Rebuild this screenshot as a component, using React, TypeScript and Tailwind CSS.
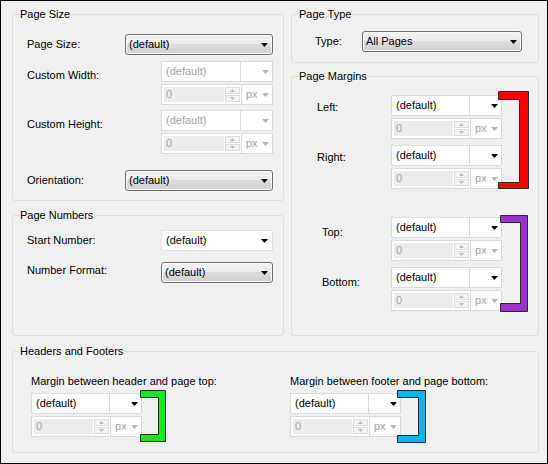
import type { ReactNode } from "react"

function Arrow({ disabled }: { disabled?: boolean }) {
  return (
    <svg width="7" height="4" viewBox="0 0 7 4" className="shrink-0">
      <path d="M0 0h7L3.5 4z" fill={disabled ? "#b4b4b4" : "#000"} />
    </svg>
  )
}

// win7 style non-editable dropdown
function Select({ text, className }: { text: string; className: string }) {
  return (
    <div
      className={`flex h-[21px] items-center justify-between rounded-[3px] border border-[#707070] bg-[linear-gradient(#f2f2f2_0%,#ebebeb_50%,#dddddd_50%,#cfcfcf_100%)] pl-[3px] pr-[4px] shadow-[inset_0_0_0_1px_#f9f9f9] ${className}`}
    >
      <span>{text}</span>
      <Arrow />
    </div>
  )
}

function Spinner() {
  return (
    <div className="my-[2px] flex w-[15px] flex-col gap-[1px]">
      <div className="flex flex-1 items-center justify-center border border-[#dcdcdc] bg-[#f4f4f4]">
        <svg width="5" height="3" viewBox="0 0 5 3"><path d="M0 3h5L2.5 0z" fill="#bdbdbd" /></svg>
      </div>
      <div className="flex flex-1 items-center justify-center border border-[#dcdcdc] bg-[#f4f4f4]">
        <svg width="5" height="3" viewBox="0 0 5 3"><path d="M0 0h5L2.5 3z" fill="#bdbdbd" /></svg>
      </div>
    </div>
  )
}

// value combo on top, disabled number + unit below
function UnitInput({ disabled, className }: { disabled?: boolean; className: string }) {
  return (
    <div className={`flex flex-col gap-[2px] ${className}`}>
      <div className="flex h-[21px] border border-[#dadada] bg-white">
        <div className={`flex-1 border-r border-[#dadada] pl-[4px] leading-[19px] ${disabled ? "text-[#a3a3a3]" : "text-black"}`}>
          (default)
        </div>
        <div className="flex w-[31px] items-center justify-end pr-[3px]">
          <Arrow disabled={disabled} />
        </div>
      </div>
      <div className="flex h-[21px] border border-[#dadada] bg-white">
        <div className="m-[2px] mr-[1px] flex-1 bg-[#ececec] pl-[2px] leading-[15px] text-[#a3a3a3]">0</div>
        <Spinner />
        <div className="ml-[1px] flex w-[31px] items-center justify-between border-l border-[#dadada] pl-[4px] pr-[3px] text-[#a3a3a3]">
          <span>px</span>
          <Arrow disabled />
        </div>
      </div>
    </div>
  )
}

function Bracket({ w, h, t, v, b, fill, className }: { w: number; h: number; t: number; v: number; b: number; fill: string; className: string }) {
  const d = `M0.5 0.5H${w - 0.5}V${h - 0.5}H0.5V${h - b + 0.5}H${w - v + 0.5}V${t - 0.5}H0.5Z`
  return (
    <svg width={w} height={h} viewBox={`0 0 ${w} ${h}`} className={`absolute ${className}`}>
      <path d={d} fill={fill} stroke="#2b2b2b" strokeWidth="1" />
    </svg>
  )
}

function Group({ title, className, children }: { title: string; className?: string; children: ReactNode }) {
  return (
    <fieldset className={`rounded-[3px] border border-[#d5dfe5] ${className ?? ""}`}>
      <legend className="ml-[6px] px-[1px] leading-[13px]">{title}</legend>
      {children}
    </fieldset>
  )
}

export default function App() {
  return (
    <div className="h-[464px] w-[548px] border border-black bg-[#f0f0f0] pl-[11px] pt-[7px] font-['Liberation_Sans',Arial,sans-serif] text-[11px] leading-[13px] text-black">
      <div className="flex gap-[7px]">
        {/* left column */}
        <div className="flex w-[272px] flex-col">
          <Group title="Page Size" className="pb-[9px]">
            <div className="mt-[13px] flex justify-between pl-[14px] pr-[10px]">
              <div className="pt-[4px]">Page Size:</div>
              <Select text="(default)" className="w-[148px]" />
            </div>
            <div className="mt-[6px] flex justify-between pl-[14px] pr-[10px]">
              <div className="pt-[8px]">Custom Width:</div>
              <UnitInput disabled className="w-[112px]" />
            </div>
            <div className="mt-[5px] flex justify-between pl-[14px] pr-[10px]">
              <div className="pt-[8px]">Custom Height:</div>
              <UnitInput disabled className="w-[112px]" />
            </div>
            <div className="mt-[16px] flex justify-between pl-[14px] pr-[10px]">
              <div className="pt-[4px]">Orientation:</div>
              <Select text="(default)" className="w-[148px]" />
            </div>
          </Group>
          <Group title="Page Numbers" className="mt-[8px] flex-1">
            <div className="mt-[8px] flex justify-between pl-[14px] pr-[10px]">
              <div className="pt-[4px]">Start Number:</div>
              <div className="flex h-[21px] w-[112px] items-center justify-between border border-[#e2e2e2] bg-white pl-[4px] pr-[4px]">
                <span>(default)</span>
                <Arrow />
              </div>
            </div>
            <div className="mt-[11px] flex justify-between pl-[14px] pr-[10px]">
              <div className="pt-[2px]">Number Format:</div>
              <Select text="(default)" className="w-[112px]" />
            </div>
          </Group>
        </div>

        {/* right column */}
        <div className="flex w-[248px] flex-col">
          <Group title="Page Type" className="pb-[10px]">
            <div className="mt-[10px] flex pl-[23px]">
              <div className="w-[47px] pt-[4px]">Type:</div>
              <Select text="All Pages" className="w-[160px]" />
            </div>
          </Group>
          <Group title="Page Margins" className="mt-[7px] flex-1 pb-[24px]">
            <div className="relative mt-[12px] flex flex-col gap-[6px]">
              <div className="flex">
                <div className="w-[99px] pl-[25px] pt-[6px]">Left:</div>
                <UnitInput className="w-[111px]" />
              </div>
              <div className="flex">
                <div className="w-[99px] pl-[25px] pt-[6px]">Right:</div>
                <UnitInput className="w-[111px]" />
              </div>
              <Bracket w={31} h={98} t={9} v={10} b={7} fill="#ff0000" className="left-[206px] top-[-4px]" />
            </div>
            <div className="relative mt-[28px] flex flex-col gap-[6px]">
              <div className="flex">
                <div className="w-[99px] pl-[30px] pt-[9px]">Top:</div>
                <UnitInput className="w-[111px]" />
              </div>
              <div className="flex">
                <div className="w-[99px] pl-[30px] pt-[9px]">Bottom:</div>
                <UnitInput className="w-[111px]" />
              </div>
              <Bracket w={28} h={97} t={8} v={8} b={9} fill="#9933cc" className="left-[208px] top-[-2px]" />
            </div>
          </Group>
        </div>
      </div>

      <Group title="Headers and Footers" className="mt-[9px] w-[527px] pb-[15px]">
        <div className="mt-[17px] flex pl-[18px]">
          <div className="w-[259px]">
            <div>Margin between header and page top:</div>
            <div className="relative mt-[5px]">
              <UnitInput className="w-[111px]" />
              <Bracket w={26} h={52} t={8} v={8} b={8} fill="#1ee61e" className="left-[109px] top-[-3px]" />
            </div>
          </div>
          <div>
            <div>Margin between footer and page bottom:</div>
            <div className="relative mt-[5px]">
              <UnitInput className="w-[111px]" />
              <Bracket w={29} h={53} t={8} v={8} b={8} fill="#0bb5ef" className="left-[107px] top-[-3px]" />
            </div>
          </div>
        </div>
      </Group>
    </div>
  )
}
